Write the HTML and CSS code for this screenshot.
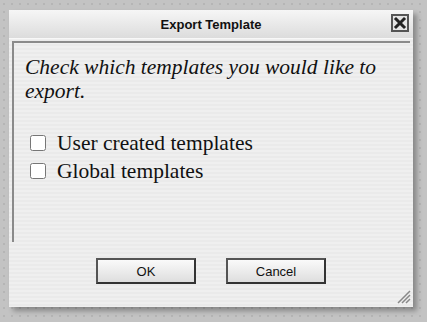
FILE: index.html
```html
<!DOCTYPE html>
<html lang="en">
  <head>
    <meta charset="UTF-8" />
    <meta name="viewport" content="width=device-width, initial-scale=1.0" />
    <title>Export Template</title>
    <link rel="stylesheet" href="styles.css">
  </head>
  <body>
    <div class="dialog">
      <div class="titlebar">
        <span class="title">Export Template</span>
        <button class="close" title="Close">
          <svg width="14" height="14" viewBox="0 0 14 14">
            <path d="M3 3 L11 11 M11 3 L3 11" stroke="#222" stroke-width="3" stroke-linecap="square" />
          </svg>
        </button>
      </div>

      <div class="panel">
        <p class="intro">Check which templates you would like to export.</p>
        <label class="option"><input type="checkbox" /> User created templates</label>
        <label class="option"><input type="checkbox" /> Global templates</label>
      </div>

      <div class="buttons">
        <button class="btn">OK</button>
        <button class="btn">Cancel</button>
      </div>

      <svg class="grip" width="16" height="16" viewBox="0 0 16 16">
        <path d="M15 3 L3 15 M15 7 L7 15 M15 11 L11 15" stroke="#888" stroke-width="1.5" />
      </svg>
    </div>
  </body>
</html>
```

FILE: styles.css
```css
body {
  margin: 0;
  padding: 10px 0 0 9px;
  background-color: #c3c3c3;
  background-image: radial-gradient(#b5b5b5 1px, transparent 1px);
  background-size: 8px 8px;
  height: 312px;
  overflow: hidden;
}

.dialog {
  position: relative;
  width: 404px;
  height: 297px;
  background-color: #efefef;
  background-image: repeating-linear-gradient(#efefef 0, #efefef 2px, #eaeaea 2px, #eaeaea 4px);
  box-shadow: 4px 4px 5px rgba(0, 0, 0, 0.3);
  display: flex;
  flex-direction: column;
}

.titlebar {
  height: 28px;
  background: linear-gradient(#f6f6f6, #dcdcdc);
  border-bottom: 1px solid #f8f8f8;
  display: flex;
  align-items: center;
  justify-content: center;
  position: relative;
}

.title {
  font-family: "Liberation Sans", Arial, sans-serif;
  font-weight: bold;
  font-size: 13px;
  color: #111;
}

.close {
  position: absolute;
  right: 4px;
  top: 4px;
  width: 18px;
  height: 18px;
  padding: 0;
  border: 2px solid #555;
  background: #e4e4e4;
  display: flex;
  align-items: center;
  justify-content: center;
}

.panel {
  margin: 2px 3px 0 3px;
  height: 187px;
  border-top: 2px solid #8a8a8a;
  border-left: 2px solid #8a8a8a;
  padding: 12px 10px 0 11px;
  font-family: "Liberation Serif", "Times New Roman", serif;
}

.intro {
  margin: 0 0 26px 0;
  font-style: italic;
  font-size: 21.5px;
  line-height: 24px;
  color: #111;
}

.option {
  display: flex;
  align-items: center;
  font-size: 21.5px;
  line-height: 28px;
  color: #111;
  padding-left: 5px;
}

.option input {
  width: 16px;
  height: 16px;
  margin: 0 11px 0 0;
}

.buttons {
  display: flex;
  justify-content: center;
  gap: 30px;
  margin-top: 16px;
}

.btn {
  width: 100px;
  height: 26px;
  border: 2px solid #444;
  border-color: #555 #333 #333 #555;
  background: linear-gradient(#fafafa, #dedede);
  font-family: "Liberation Sans", Arial, sans-serif;
  font-size: 13px;
  color: #111;
}

.grip {
  position: absolute;
  right: 2px;
  bottom: 3px;
}
```
